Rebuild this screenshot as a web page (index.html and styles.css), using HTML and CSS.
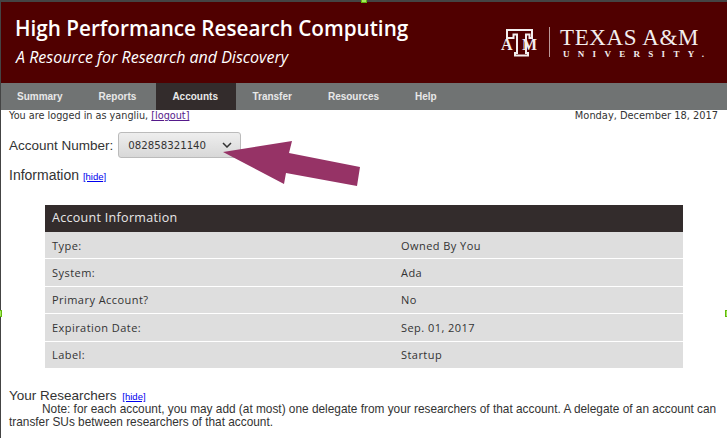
FILE: index.html
```html
<!DOCTYPE html>
<html lang="en">
<head>
    <meta charset="UTF-8">
    <meta name="viewport" content="width=device-width, initial-scale=1.0">
    <title>High Performance Research Computing</title>
    <link rel="stylesheet" href="styles.css">
</head>
<body>
    <div class="page">
        <header class="banner">
            <div class="titles">
                <h1>High Performance Research Computing</h1>
                <p>A Resource for Research and Discovery</p>
            </div>
            <div class="logo">
                <div class="logo-mark">
                    <svg width="35" height="28" viewBox="0 0 35 28">
                        <path d="M5 1h25v8h-2.500V5.500H24V24h2v2.500H13V24h2V5.500h-3.500V9H5z" fill="none" stroke="#f3eeee" stroke-width="2"/>
                    </svg>
                    <span class="mark-a">A</span>
                    <span class="mark-m">M</span>
                </div>
                <div class="logo-rule"></div>
                <div class="logo-text">
                    <div class="logo-name">TEXAS A&amp;M</div>
                    <div class="logo-sub">UNIVERSITY.</div>
                </div>
            </div>
        </header>
        <nav class="menu">
            <a href="#">Summary</a>
            <a href="#">Reports</a>
            <a href="#" class="active">Accounts</a>
            <a href="#">Transfer</a>
            <a href="#">Resources</a>
            <a href="#">Help</a>
        </nav>
        <div class="status">
            <span>You are logged in as yangliu, <a href="#" class="visited">[logout]</a></span>
            <span class="today">Monday, December 18, 2017</span>
        </div>
        <div class="account-row">
            <label for="account">Account Number:</label>
            <button id="account" class="account-select" type="button">
                <span>082858321140</span>
                <svg width="10" height="6" viewBox="0 0 10 6"><path d="M1 1l4 4 4-4" fill="none" stroke="#333" stroke-width="1.500"/></svg>
            </button>
        </div>
        <h2 class="section">Information <a href="#">[hide]</a></h2>
        <div class="info">
            <div class="info-head">Account Information</div>
            <div class="info-row"><span>Type:</span><span>Owned By You</span></div>
            <div class="info-row"><span>System:</span><span>Ada</span></div>
            <div class="info-row"><span>Primary Account?</span><span>No</span></div>
            <div class="info-row"><span>Expiration Date:</span><span>Sep. 01, 2017</span></div>
            <div class="info-row"><span>Label:</span><span>Startup</span></div>
        </div>
        <h2 class="section researchers">Your Researchers <a href="#">[hide]</a></h2>
        <p class="note">Note: for each account, you may add (at most) one delegate from your researchers of that account. A delegate of an account can transfer SUs between researchers of that account.</p>
    </div>

    <svg class="arrow" width="727" height="438" viewBox="0 0 727 438">
        <polygon points="223,152 292,141 289,153 360,167 357,186 286,173 284,184" fill="#963366"/>
    </svg>
    <span class="handle handle-top"></span>
    <span class="handle handle-left"></span>
    <span class="handle handle-right"></span>
</body>
</html>
```

FILE: styles.css
```css
* {
    margin: 0;
    padding: 0;
    box-sizing: border-box;
}
html, body {
    height: 438px;
    overflow: hidden;
}
body {
    background: #fff;
    color: #333;
    font-family: 'DejaVu Sans', sans-serif;
    position: relative;
}
.page {
    height: 438px;
    border-top: 2px solid #444;
    border-left: 1px solid #444;
    overflow: hidden;
}
.banner {
    height: 81px;
    background: #500000;
    color: #fff;
    display: flex;
    justify-content: space-between;
    padding: 13px 6px 0 14px;
}
.banner h1 {
    font-family: 'Open Sans', sans-serif;
    font-size: 20.7px;
    font-weight: 600;
    line-height: 26px;
}
.banner p {
    font-family: 'Open Sans', sans-serif;
    font-size: 16px;
    font-style: italic;
    line-height: 22px;
    margin-top: 5px;
    padding-left: 1px;
}
.logo {
    display: flex;
    align-items: flex-start;
    color: #f3eeee;
    font-family: 'Liberation Serif', serif;
    padding-top: 14px;
}
.logo-mark {
    width: 35px;
    height: 28px;
    position: relative;
    font-weight: bold;
}
.mark-a, .mark-m {
    position: absolute;
    top: 8px;
    font-size: 16px;
    line-height: 16px;
}
.mark-a { left: -1px; }
.mark-m { left: 20px; }
.logo-rule {
    width: 1px;
    height: 30px;
    background: #b99;
    margin: -2px 10px 0 12px;
}
.logo-text {
    width: 161px;
    margin-top: -3px;
}
.logo-name {
    font-size: 23px;
    line-height: 23px;
    letter-spacing: 0.6px;
    white-space: nowrap;
}
.logo-sub {
    font-size: 9px;
    font-weight: bold;
    letter-spacing: 8.3px;
    line-height: 11px;
    padding-left: 3px;
    white-space: nowrap;
}
.menu {
    height: 27px;
    background: #707373;
    display: flex;
}
.menu a {
    color: #e8e8e8;
    font-family: 'Liberation Sans', sans-serif;
    font-size: 10px;
    font-weight: bold;
    line-height: 27px;
    text-decoration: none;
    padding: 0 20px 0 16px;
}
.menu a.active {
    background: #332c2c;
    padding-right: 18.5px;
}
.status {
    display: flex;
    justify-content: space-between;
    font-size: 9.7px;
    line-height: 12px;
    padding: 0 9px 0 8px;
}
.status a.visited {
    color: #551a8b;
}
.status .today {
    font-size: 9.85px;
}
.account-row {
    display: flex;
    align-items: center;
    margin: 10px 0 0 8px;
    font-family: 'Liberation Sans', sans-serif;
    font-size: 13.5px;
    gap: 5px;
}
.account-select {
    width: 123px;
    height: 26px;
    display: flex;
    justify-content: space-between;
    align-items: center;
    padding: 0 8px 0 9px;
    background: linear-gradient(#eee, #d8d8d8);
    border: 1px solid #bbb;
    border-radius: 3px;
    color: #333;
    font-family: 'DejaVu Sans', sans-serif;
    font-size: 10.2px;
}
.section {
    font-family: 'Liberation Sans', sans-serif;
    font-size: 14px;
    font-weight: normal;
    line-height: 16px;
    margin: 9px 0 0 8px;
}
.section a {
    color: #00e;
    font-size: 9.500px;
}
.info {
    width: 638px;
    margin: 20px 0 0 44px;
    font-family: 'Open Sans', sans-serif;
    font-size: 11px;
    letter-spacing: 0.45px;
}
.info-head {
    height: 27px;
    line-height: 26px;
    padding-left: 7px;
    background: #332c2c;
    color: #e8e8e8;
    font-size: 12.5px;
    letter-spacing: 0.3px;
}
.info-row {
    height: 27.4px;
    display: grid;
    grid-template-columns: 349px 1fr;
    align-items: center;
    padding-left: 7px;
    background: #dedede;
    border-bottom: 1px solid #fff;
}
.researchers {
    margin-top: 19px;
    font-size: 13.500px;
}
.researchers a {
    margin-left: 2px;
}
.note {
    font-family: 'Liberation Sans', sans-serif;
    font-size: 11.85px;
    line-height: 13.5px;
    text-indent: 33px;
    margin: -2px 8px 0;
}
.arrow {
    position: absolute;
    left: 0;
    top: 0;
}
.handle {
    position: absolute;
    width: 6px;
    height: 7px;
    background: #a4ec5a;
    border: 1px solid #62b80e;
}
.handle-top { left: 361px; top: -4px; }
.handle-left { left: -4px; top: 310px; }
.handle-right { left: 725px; top: 310px; }
```
